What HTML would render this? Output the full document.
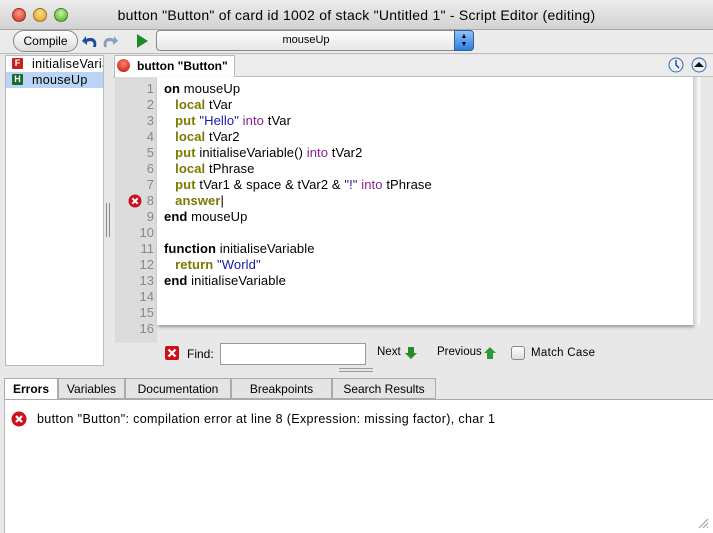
<!DOCTYPE html>
<html><head><style>
*{margin:0;padding:0;box-sizing:border-box}
body{width:713px;height:533px;background:#e8e8e8;font-family:"Liberation Sans",sans-serif;font-size:12px;color:#000;position:relative;overflow:hidden}
.abs{position:absolute}
.title{left:0;top:0;width:713px;height:30px;background:linear-gradient(#ececec,#d2d2d2);border-bottom:1px solid #a8a8a8;text-align:center;font-size:14px;line-height:30px;letter-spacing:.25px}
.light{width:14px;height:14px;border-radius:50%;top:8px;border:1px solid rgba(0,0,0,.35)}
.code{font-size:13px;letter-spacing:.1px}
.code div{height:16px;line-height:16px;white-space:pre}
.k{color:#7a7a00;font-weight:bold}
.b{font-weight:bold}
.s{color:#1a1aa6}
.p{color:#8a2090}
.gut div{height:16px;line-height:16px;text-align:right;color:#888;font-size:13px}
.tab{top:378px;height:21px;border:1px solid #aaa;background:#e4e4e4;line-height:20px;text-align:center;font-size:12px}
</style></head><body>
<div class="abs title">button "Button" of card id 1002 of stack "Untitled 1" - Script Editor (editing)</div>
<div class="abs light" style="left:12px;background:radial-gradient(circle at 50% 35%,#ff9a8a,#d42a14)"></div>
<div class="abs light" style="left:33px;background:radial-gradient(circle at 50% 35%,#ffe08a,#e09a10)"></div>
<div class="abs light" style="left:54px;background:radial-gradient(circle at 50% 35%,#c8f59a,#4aa81c)"></div>
<div class="abs" style="left:0;top:31px;width:713px;height:23px;background:#ebebeb;border-bottom:1px solid #bbb"></div>
<div class="abs" style="left:13px;top:30px;width:65px;height:22px;border:1px solid #888;border-radius:11px;background:linear-gradient(#fff,#ddd);text-align:center;line-height:20px;font-size:12px">Compile</div>
<svg class="abs" style="left:82px;top:32px" width="70" height="18"><path d="M14 15 C16 7 10 4 4 7 L4 4 L0 9 L5 13 L5 10 C9 8 13 9 11 15Z" fill="#1f4f9a"/><path d="M22 15 C20 7 26 4 32 7 L32 4 L36 9 L31 13 L31 10 C27 8 23 9 25 15Z" fill="#8aa0bc"/><path d="M55 2 L66 9 L55 16Z" fill="#1a8a2a"/></svg>
<div class="abs" style="left:156px;top:30px;width:318px;height:21px;border:1px solid #888;border-radius:4px;background:linear-gradient(#fff,#e6e6e6);text-align:center;line-height:19px;font-size:11px;padding-right:18px">mouseUp</div>
<div class="abs" style="left:454px;top:30px;width:20px;height:21px;border-radius:0 4px 4px 0;background:linear-gradient(#8cc4f8,#2a7ee0);border:1px solid #3a5a9a;color:#000;font-size:7px;line-height:8px;text-align:center;padding-top:2px">▲<br>▼</div>
<div class="abs" style="left:5px;top:55px;width:99px;height:311px;background:#fff;border:1px solid #bbb"></div>
<div class="abs" style="left:12px;top:58px;width:11px;height:11px;background:#c8201c;color:#fff;font-size:9px;font-weight:bold;text-align:center;line-height:11px;border-radius:1px">F</div>
<div class="abs" style="left:32px;top:57px;font-size:12.5px;letter-spacing:.3px;white-space:nowrap;width:71px;overflow:hidden">initialiseVariable</div>
<div class="abs" style="left:6px;top:72px;width:97px;height:16px;background:#b9d4f5"></div>
<div class="abs" style="left:12px;top:74px;width:11px;height:11px;background:#1a6a2a;color:#fff;font-size:9px;font-weight:bold;text-align:center;line-height:11px;border-radius:1px">H</div>
<div class="abs" style="left:32px;top:73px;font-size:12.5px;letter-spacing:.3px">mouseUp</div>
<div class="abs" style="left:113px;top:55px;width:600px;height:22px;background:#ececec;border-bottom:1px solid #c0c0c0"></div>
<div class="abs" style="left:114px;top:55px;width:121px;height:23px;background:#fff;border:1px solid #bbb;border-bottom:none"></div>
<div class="abs" style="left:117px;top:59px;width:13px;height:13px;border-radius:50%;background:radial-gradient(circle at 50% 35%,#ff8070,#c01008)"></div>
<div class="abs b" style="left:137px;top:59px;font-size:12px">button "Button"</div>
<svg class="abs" style="left:668px;top:57px" width="40" height="16"><circle cx="8" cy="8" r="7" fill="#e8f2fc" stroke="#3a6a9a"/><path d="M8 3 V8 L11 11" stroke="#1a3a6a" fill="none" stroke-width="1.3"/><circle cx="31" cy="8" r="7" fill="#e8f2fc" stroke="#3a6a9a"/><path d="M26 10 L31 5 L36 10Z" fill="#111"/></svg>
<div class="abs" style="left:115px;top:77px;width:42px;height:266px;background:#dcdcdc"></div>
<div class="abs" style="left:157px;top:77px;width:536px;height:248px;background:#fff;box-shadow:1px 2px 3px #999"></div>
<div class="abs" style="left:693px;top:77px;width:7px;height:248px;background:linear-gradient(90deg,#ccc,#fff)"></div>
<div class="abs" style="left:106px;top:203px;width:4px;height:34px;border-left:1px solid #888;border-right:1px solid #888"></div>
<div class="abs gut" style="left:120px;top:81px;width:34px">
<div>1</div><div>2</div><div>3</div><div>4</div><div>5</div><div>6</div><div>7</div><div>8</div><div>9</div><div>10</div><div>11</div><div>12</div><div>13</div><div>14</div><div>15</div><div>16</div>
</div>
<svg class="abs" style="left:128px;top:194px" width="14" height="14"><circle cx="7" cy="7" r="6.5" fill="#c8141c"/><path d="M4.3 4.3 L9.7 9.7 M9.7 4.3 L4.3 9.7" stroke="#fff" stroke-width="2"/></svg>
<div class="abs code" style="left:164px;top:81px">
<div><span class="b">on</span> mouseUp</div>
<div>   <span class="k">local</span> tVar</div>
<div>   <span class="k">put</span> <span class="s">"Hello"</span> <span class="p">into</span> tVar</div>
<div>   <span class="k">local</span> tVar2</div>
<div>   <span class="k">put</span> initialiseVariable() <span class="p">into</span> tVar2</div>
<div>   <span class="k">local</span> tPhrase</div>
<div>   <span class="k">put</span> tVar1 &amp; space &amp; tVar2 &amp; <span class="s">"!"</span> <span class="p">into</span> tPhrase</div>
<div>   <span class="k">answer</span><span style="font-weight:normal">|</span></div>
<div><span class="b">end</span> mouseUp</div>
<div> </div>
<div><span class="b">function</span> initialiseVariable</div>
<div>   <span class="k">return</span> <span class="s">"World"</span></div>
<div><span class="b">end</span> initialiseVariable</div>
</div>
<svg class="abs" style="left:165px;top:346px" width="14" height="14"><rect width="14" height="14" rx="2" fill="#d0101a"/><path d="M3.5 3.5 L10.5 10.5 M10.5 3.5 L3.5 10.5" stroke="#fff" stroke-width="2.2"/></svg>
<div class="abs" style="left:187px;top:347px">Find:</div>
<div class="abs" style="left:220px;top:343px;width:146px;height:22px;background:#fff;border:1px solid #999"></div>
<div class="abs" style="left:377px;top:346px;font-size:11.5px">Next</div>
<svg class="abs" style="left:404px;top:346px" width="14" height="14"><path d="M4 1 H10 V7 H13 L7 13 L1 7 H4Z" fill="#2a8a2a"/></svg>
<div class="abs" style="left:437px;top:346px;font-size:11.5px">Previous</div>
<svg class="abs" style="left:483px;top:346px" width="14" height="14"><path d="M4 13 H10 V7 H13 L7 1 L1 7 H4Z" fill="#2a9a3a"/></svg>
<div class="abs" style="left:511px;top:346px;width:14px;height:14px;border:1px solid #888;border-radius:3px;background:linear-gradient(#fff,#ddd)"></div>
<div class="abs" style="left:531px;top:347px;font-size:11.5px;letter-spacing:.3px">Match Case</div>
<div class="abs" style="left:339px;top:368px;width:34px;height:4px;border-top:1px solid #999;border-bottom:1px solid #999"></div>
<div class="abs tab b" style="left:4px;width:54px;background:#fff;border-bottom:none;height:22px">Errors</div>
<div class="abs tab" style="left:58px;width:67px">Variables</div>
<div class="abs tab" style="left:125px;width:106px">Documentation</div>
<div class="abs tab" style="left:231px;width:101px">Breakpoints</div>
<div class="abs tab" style="left:332px;width:104px">Search Results</div>
<div class="abs" style="left:4px;top:399px;width:709px;height:134px;background:#fff;border-top:1px solid #aaa;border-left:1px solid #bbb"></div>
<svg class="abs" style="left:11px;top:411px" width="16" height="16"><circle cx="8" cy="8" r="7.5" fill="#c8141c"/><path d="M5 5 L11 11 M11 5 L5 11" stroke="#fff" stroke-width="2.2"/></svg>
<div class="abs" style="left:37px;top:412px;font-size:12.5px;letter-spacing:.35px;white-space:nowrap">button "Button": compilation error at line 8 (Expression: missing factor), char 1</div>
<svg class="abs" style="left:697px;top:517px" width="12" height="12"><path d="M11 2 L2 11 M11 6 L6 11 M11 10 L10 11" stroke="#999"/></svg>
</body></html>
